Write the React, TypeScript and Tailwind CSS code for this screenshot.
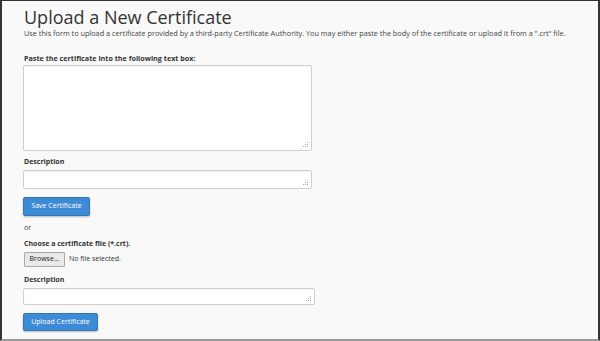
export default function App() {
  const label = 'block text-[7px] leading-[10px] font-bold text-[#333]';
  const box =
    'block resize-none rounded-[2px] border border-[#cfcfcf] bg-white shadow-[inset_0_1px_1px_rgba(0,0,0,0.05)] outline-none';
  const primary =
    'flex items-center justify-center rounded-[2px] border border-[#2f76bb] bg-[#3c8bd4] text-[7px] text-white shadow-[0_1px_2px_rgba(0,0,0,0.25)]';

  // textarea with the dotted resize grip in its corner
  const Field = ({ w, h, mt }: { w: string; h: string; mt: string }) => (
    <div className={`relative ${mt}`}>
      <textarea className={`${box} ${w} ${h}`} />
      <svg className="absolute right-[3px] bottom-[3px]" width="6" height="6" viewBox="0 0 6 6">
        <g fill="#a8a8a8">
          <rect x="4" y="0" width="1" height="1" />
          <rect x="2" y="2" width="1" height="1" />
          <rect x="4" y="2" width="1" height="1" />
          <rect x="0" y="4" width="1" height="1" />
          <rect x="2" y="4" width="1" height="1" />
          <rect x="4" y="4" width="1" height="1" />
        </g>
      </svg>
    </div>
  );

  return (
    <div className="w-[600px] h-[341px] overflow-hidden bg-[#f9f9f9] border-t border-l-2 border-r-2 border-b-2 border-t-[#333] border-l-[#333] border-r-[#333] border-b-[#9a9a9a] pl-[21px] font-['Open_Sans','Liberation_Sans',sans-serif] text-[#333]">
      <div className="flex flex-col items-start">
        {/* Heading */}
        <h1 className="mt-[5px] pl-[1px] text-[18px] leading-[22px] font-normal text-[#333]">
          Upload a New Certificate
        </h1>
        <p className="pl-[1px] text-[7.3px] leading-[10px] text-[#444] whitespace-nowrap">
          Use this form to upload a certificate provided by a third-party Certificate Authority. You may either paste the body of the certificate or upload it from a ".crt" file.
        </p>

        {/* Paste form */}
        <label className={`${label} mt-[15px] pl-[1px] !text-[7.2px]`}>Paste the certificate into the following text box:</label>
        <Field w="w-[289px]" h="h-[86px]" mt="mt-[2px]" />

        <label className={`${label} mt-[6px] pl-[1px]`}>Description</label>
        <Field w="w-[289px]" h="h-[19px]" mt="mt-[3px]" />

        <button className={`${primary} mt-[8px] w-[67px] h-[19px]`}>Save Certificate</button>

        <p className="mt-[7px] pl-[1px] text-[7px] leading-[10px] text-[#444]">or</p>

        {/* Upload form */}
        <label className={`${label} mt-[6px] pl-[1px]`}>Choose a certificate file (*.crt).</label>
        <div className="mt-[3px] flex items-center gap-[4px] pl-[1px]">
          <span className="flex h-[15px] w-[41px] items-center justify-center rounded-[1px] border border-[#a9a9a9] bg-[#e9e9e9] text-[7px] text-[#222]">
            Browse...
          </span>
          <span className="text-[7px] text-[#333]">No file selected.</span>
        </div>

        <label className={`${label} mt-[8px] pl-[1px]`}>Description</label>
        <Field w="w-[292px]" h="h-[17px]" mt="mt-[3px]" />

        <button className={`${primary} mt-[8px] w-[75px] h-[18px]`}>Upload Certificate</button>
      </div>
    </div>
  );
}
